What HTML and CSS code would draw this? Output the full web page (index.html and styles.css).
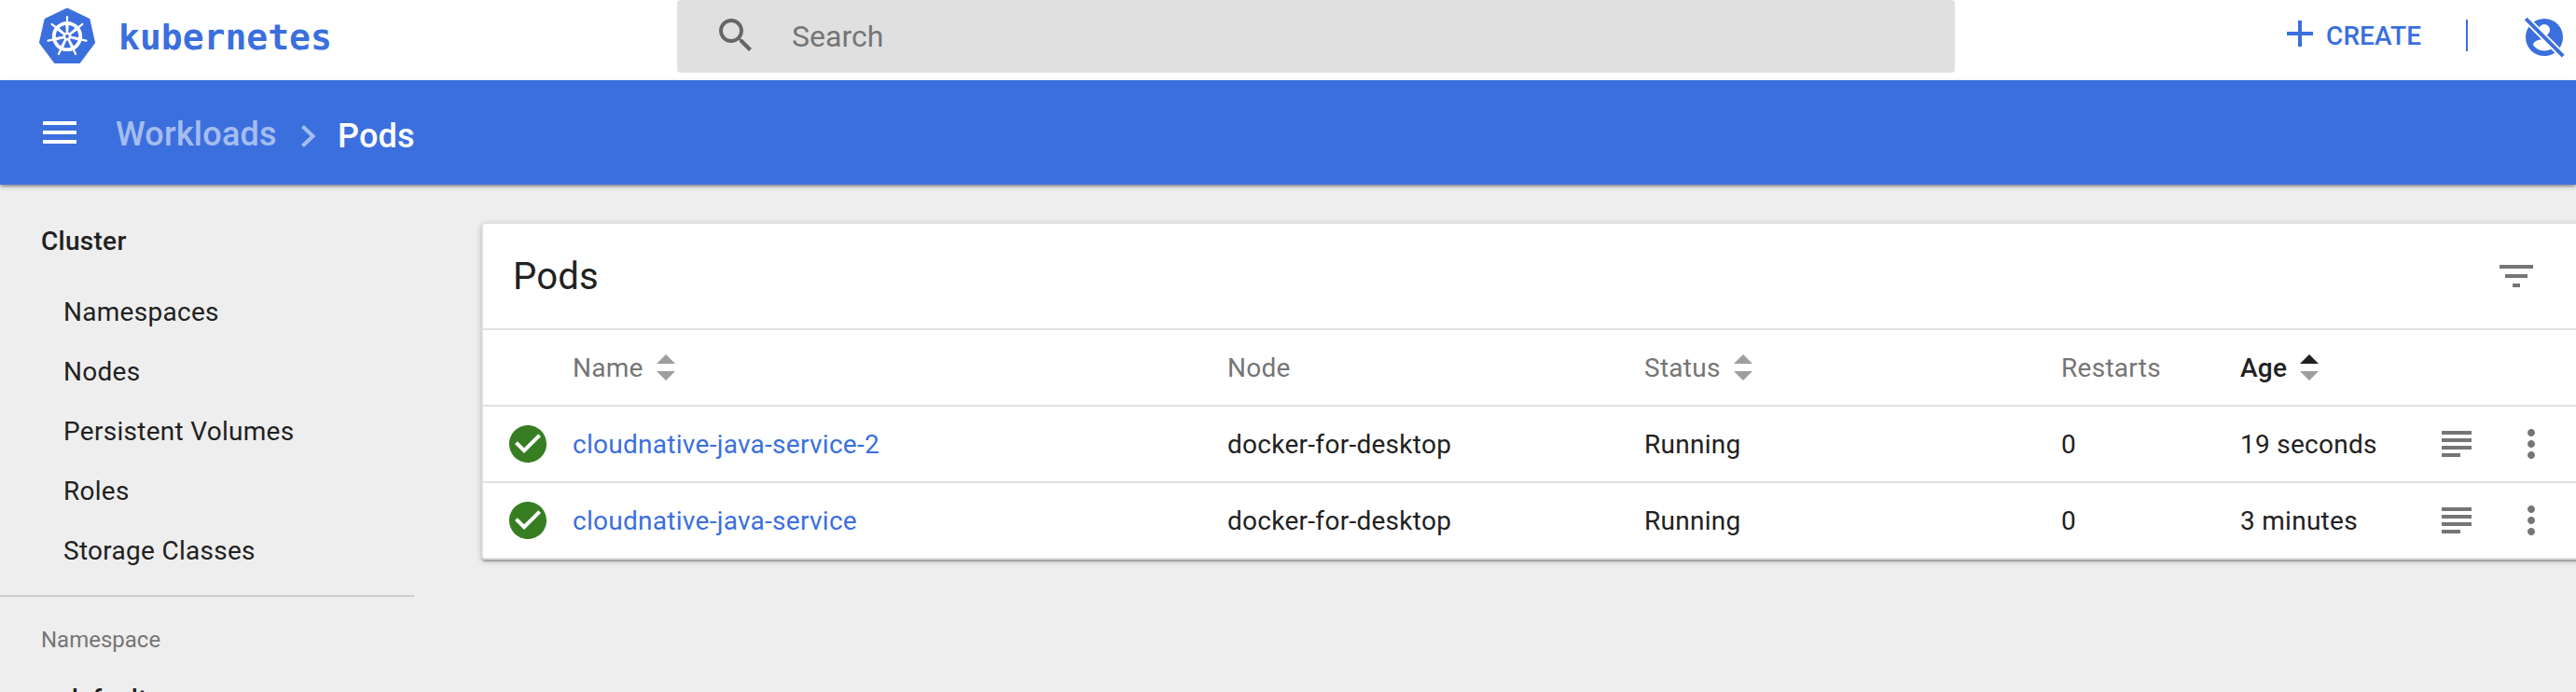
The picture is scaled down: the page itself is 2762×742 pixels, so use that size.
FILE: index.html
```html
<!DOCTYPE html>
<html lang="en">
<head>
<meta charset="utf-8">
<title>Pods - Kubernetes Dashboard</title>
<link rel="stylesheet" href="styles.css">
</head>
<body>
<svg class="defs" width="0" height="0">
  <defs>
    <symbol id="sort" viewBox="0 0 20 28"><path class="up" d="M0 10 10 0 20 10z"/><path class="down" d="M0 18h20L10 28z"/></symbol>
    <symbol id="ok" viewBox="0 0 24 24"><path d="M12 2C6.48 2 2 6.48 2 12s4.48 10 10 10 10-4.480 10-10S17.520 2 12 2zm-2 15l-5-5 1.410-1.410L10 14.170l7.590-7.590L19 8l-9 9z"/></symbol>
    <symbol id="logs" viewBox="0 0 32 28"><path d="M0 0h32v4H0zM0 8h32v4H0zM0 16h32v4H0zM0 24h20v4H0z"/></symbol>
    <symbol id="more" viewBox="0 0 24 24"><path d="M12 8c1.100 0 2-.9 2-2s-.9-2-2-2-2 .9-2 2 .9 2 2 2zm0 2c-1.100 0-2 .9-2 2s.9 2 2 2 2-.9 2-2-.9-2-2-2zm0 6c-1.100 0-2 .9-2 2s.9 2 2 2 2-.9 2-2-.9-2-2-2z"/></symbol>
  </defs>
</svg>
<header class="header">
  <a class="brand">
    <svg class="logo" width="60" height="60" viewBox="-30 -31 60 60">
      <path class="hept" d="M0-29 23-18 28.500 6.500 12.800 27.500H-12.800L-28.500 6.500-23-18z"/>
      <g class="wheel">
        <circle r="14.200"/>
        <g id="spoke"><path d="M0-3V-21"/><path class="wedge" d="M-1-2-1.700-13H1.700L1-2z"/></g>
        <use href="#spoke" transform="rotate(51.430)"/>
        <use href="#spoke" transform="rotate(102.860)"/>
        <use href="#spoke" transform="rotate(154.290)"/>
        <use href="#spoke" transform="rotate(205.710)"/>
        <use href="#spoke" transform="rotate(257.140)"/>
        <use href="#spoke" transform="rotate(308.570)"/>
        <circle class="hub" r="4.500"/><circle class="dot" r="1.900"/>
      </g>
    </svg>
    <span class="wordmark">kubernetes</span>
  </a>
  <div class="search">
    <svg width="48" height="48" viewBox="0 0 24 24"><path d="M15.500 14h-.79l-.28-.27C15.410 12.590 16 11.110 16 9.500 16 5.910 13.090 3 9.500 3S3 5.910 3 9.500 5.910 16 9.500 16c1.610 0 3.090-.59 4.230-1.570l.27.28v.79l5 4.990L20.490 19l-4.990-5zm-6 0C7.010 14 5 11.990 5 9.500S7.010 5 9.500 5 14 7.010 14 9.500 11.990 14 9.500 14z"/></svg>
    <span>Search</span>
  </div>
  <div class="actions">
    <svg width="48" height="48" viewBox="0 0 24 24"><path d="M19 13h-6v6h-2v-6H5v-2h6V5h2v6h6v2z"/></svg>
    <span class="create">CREATE</span>
    <i class="sep"></i>
    <svg class="user" width="48" height="48" viewBox="0 0 48 48">
      <circle cx="24" cy="24" r="20"/>
      <circle class="cut" cx="24" cy="16" r="6"/>
      <path class="cut" d="M12 32c0-4 8-6.200 12-6.200s12 2.200 12 6.200c-2.600 3.900-7 6.400-12 6.400S14.600 35.900 12 32z"/>
      <path class="gap" d="M4.500 4.500 44 44"/>
      <path class="slash" d="M4.200 4.200 44.200 44.200"/>
    </svg>
  </div>
</header>
<nav class="toolbar">
  <svg class="menu" width="36" height="24" viewBox="0 0 36 24"><path d="M0 0h36v4H0zM0 10h36v4H0zM0 20h36v4H0z"/></svg>
  <a class="parent">Workloads</a>
  <svg class="chevron" width="16" height="24" viewBox="0 0 16 24"><path d="M1.500 1.500 12.500 12 1.500 22.500"/></svg>
  <span class="current">Pods</span>
</nav>
<div class="page">
  <aside class="sidebar">
    <a class="group">Cluster</a>
    <a class="item">Namespaces</a>
    <a class="item">Nodes</a>
    <a class="item">Persistent Volumes</a>
    <a class="item">Roles</a>
    <a class="item">Storage Classes</a>
    <div class="namespace">
      <span class="label">Namespace</span>
      <span class="value">default</span>
    </div>
  </aside>
  <main class="card">
    <div class="title">
      <h1>Pods</h1>
      <svg class="filter" width="36" height="24" viewBox="0 0 36 24"><path d="M0 0h36v4H0zM6 10h24v4H6zM14 20h8v4h-8z"/></svg>
    </div>
    <div class="row head">
      <span></span>
      <span>Name<svg class="sort"><use href="#sort"/></svg></span>
      <span>Node</span>
      <span>Status<svg class="sort"><use href="#sort"/></svg></span>
      <span>Restarts</span>
      <span class="active">Age<svg class="sort"><use href="#sort"/></svg></span>
    </div>
    <div class="row">
      <svg class="ok"><use href="#ok"/></svg>
      <a class="link">cloudnative-java-service-2</a>
      <span>docker-for-desktop</span>
      <span>Running</span>
      <span>0</span>
      <span>19 seconds</span>
      <svg class="logs"><use href="#logs"/></svg>
      <svg class="more"><use href="#more"/></svg>
    </div>
    <div class="row">
      <svg class="ok"><use href="#ok"/></svg>
      <a class="link">cloudnative-java-service</a>
      <span>docker-for-desktop</span>
      <span>Running</span>
      <span>0</span>
      <span>3 minutes</span>
      <svg class="logs"><use href="#logs"/></svg>
      <svg class="more"><use href="#more"/></svg>
    </div>
  </main>
</div>
</body>
</html>
```
FILE: styles.css
```css
* { box-sizing: border-box; }
body {
  margin: 0;
  width: 2762px;
  height: 742px;
  overflow: hidden;
  display: flex;
  flex-direction: column;
  background: #eee;
  color: #212121;
  font: 28px/32px Roboto, sans-serif;
  letter-spacing: .28px;
}
svg { display: block; flex: none; }
.defs { position: absolute; }

.header { display: flex; flex: none; height: 86px; background: #fff; align-items: flex-start; }
.brand { display: flex; width: 726px; padding: 8px 0 0 42px; }
.hept { fill: #3b6fde; stroke: #3b6fde; stroke-width: 3; stroke-linejoin: round; }
.wheel { fill: none; stroke: #fff; stroke-width: 2.200; stroke-linecap: round; }
.wheel circle:first-child { stroke-width: 3.800; }
.wheel .wedge { fill: #fff; stroke: none; }
.wheel .hub { fill: #fff; stroke: none; }
.wheel .dot { fill: #3b6fde; stroke: none; }
.wordmark {
  margin: 10px 0 0 25px;
  color: #3b6fde;
  font: bold 38px/44px "DejaVu Sans Mono", monospace;
  letter-spacing: 0;
}
.search {
  display: flex;
  width: 1370px;
  height: 78px;
  padding: 14px 0 0 38px;
  background: #e0e0e0;
  border-radius: 4px;
  color: #757575;
  font-size: 32px;
  line-height: 50px;
  letter-spacing: 0;
}
.search svg { fill: #666; margin-left: 1px; }
.search span { margin-left: 36px; }
.actions { display: flex; padding-left: 346px; color: #3b6fde; fill: #3b6fde; }
.actions > svg:first-child { margin-top: 12px; }
.create { margin: 23px 0 0 4px; width: 150px; font-weight: 500; letter-spacing: .1px; }
.sep { width: 2px; height: 34px; margin: 21px 58px 0 0; background: #3b6fde; }
.user { margin-top: 16px; overflow: visible; }
.user .cut { fill: #fff; }
.user .gap { stroke: #fff; stroke-width: 7.500; }
.user .slash { stroke: #3b6fde; stroke-width: 4; }

.toolbar {
  position: relative;
  display: flex;
  flex: none;
  height: 112px;
  padding-left: 46px;
  background: #3b6fde;
  box-shadow: 0 2px 6px rgba(0,0,0,.2), 0 2px 2px rgba(0,0,0,.14), 0 4px 2px -2px rgba(0,0,0,.12);
  color: #fff;
  fill: #fff;
  font-size: 36px;
  line-height: 44px;
  font-weight: 500;
  letter-spacing: .2px;
}
.menu { margin-top: 44px; }
.parent { margin: 36px 0 0 42px; width: 199px; opacity: .54; }
.chevron { margin-top: 48px; fill: none; stroke: #fff; stroke-width: 4; opacity: .54; }
.current { margin: 38px 0 0 23px; }

.page { display: flex; flex: 1; align-items: flex-start; }
.sidebar { display: flex; flex: none; flex-direction: column; width: 444px; padding-top: 45px; }
.group { padding-left: 44px; font-weight: 500; margin-bottom: 28px; line-height: 32px; }
.item { padding-left: 68px; line-height: 64px; height: 64px; }
.namespace { margin-top: 15px; border-top: 2px solid #ccc; display: flex; flex-direction: column; }
.label { padding: 30px 0 0 44px; font-size: 24px; color: #757575; letter-spacing: 0; }
.value { padding: 32px 0 0 68px; font-weight: 500; }

.card {
  flex: none;
  width: 2300px;
  margin: 40px 0 0 72px;
  background: #fff;
  border: 2px solid #e0e0e0;
  border-radius: 4px;
  box-shadow: 0 2px 6px rgba(0,0,0,.2), 0 2px 2px rgba(0,0,0,.14), 0 4px 2px -2px rgba(0,0,0,.12);
}
.title { display: flex; height: 112px; padding-left: 32px; }
h1 { margin: 33px 0 0; width: 2130px; font-size: 40px; line-height: 48px; font-weight: 400; letter-spacing: .2px; }
.filter { margin-top: 44px; fill: #757575; }
.row {
  display: grid;
  grid-template-columns: 96px 702px 447px 447px 192px 216px 72px 48px;
  align-items: center;
  height: 82px;
  border-top: 2px solid #e0e0e0;
}
.head { color: #757575; }
.row span { display: flex; align-items: center; }
.row span, .link { padding-top: 1px; }
.sort { width: 20px; height: 28px; margin: -1px 0 0 14px; fill: #9e9e9e; }
.active { color: #212121; font-weight: 500; }
.active .sort { fill: #212121; }
.up { fill: inherit; }
.down { fill: #9e9e9e; }
.ok { width: 48px; height: 48px; margin-left: 24px; fill: #377d22; }
.link { color: #3b6fde; }
.logs { width: 32px; height: 28px; fill: #757575; }
.more { width: 48px; height: 48px; fill: #757575; }
```
